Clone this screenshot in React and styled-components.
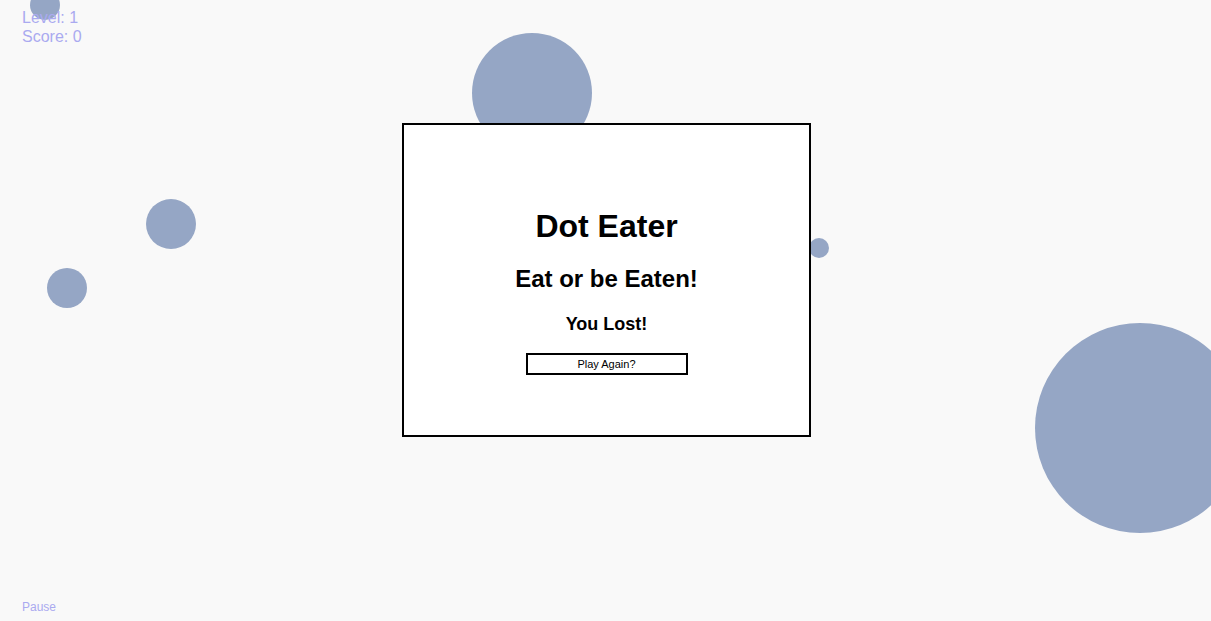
import React from 'react';
import styled, { createGlobalStyle } from 'styled-components';

const GlobalStyle = createGlobalStyle`
    html, body {
        margin: 0;
        padding: 0;
        background: #f9f9f9;
        font-family: 'Liberation Sans', Arial, Helvetica, sans-serif;
    }
`;

const Stage = styled.div`
    position: relative;
    width: 100vw;
    height: 100vh;
    overflow: hidden;
    background: #f9f9f9;
    display: flex;
    flex-direction: column;
    align-items: center;
    padding: 123px 0 0 2px;
    box-sizing: border-box;
`;

const Field = styled.div`
    position: absolute;
    inset: 0;
    pointer-events: none;
`;

const Dot = styled.div`
    position: absolute;
    border-radius: 50%;
    background: #95a6c5;
`;

const Hud = styled.div`
    position: absolute;
    top: 8px;
    left: 22px;
    font-size: 16px;
    line-height: 19px;
    color: #aaaaf0;
`;

const PauseLink = styled.div`
    position: absolute;
    left: 22px;
    bottom: 7px;
    font-size: 12px;
    line-height: 14px;
    color: #aaaaf0;
    cursor: pointer;
`;

const Modal = styled.div`
    position: relative;
    width: 409px;
    height: 314px;
    box-sizing: border-box;
    border: 2px solid #000;
    background: #fff;
    display: flex;
    flex-direction: column;
    align-items: center;
    padding-top: 85px;
`;

const Title = styled.h1`
    margin: 0;
    font-size: 32px;
    line-height: 32px;
    font-weight: bold;
    color: #000;
`;

const Tagline = styled.h2`
    margin: 25px 0 0;
    font-size: 24px;
    line-height: 24px;
    font-weight: bold;
    color: #000;
`;

const Result = styled.h3`
    margin: 24px 0 0;
    font-size: 18px;
    line-height: 18px;
    font-weight: bold;
    color: #000;
`;

const Button = styled.button`
    margin-top: 20px;
    width: 162px;
    height: 22px;
    box-sizing: border-box;
    border: 2px solid #000;
    background: #fff;
    font-family: 'Liberation Sans', Arial, sans-serif;
    font-size: 11px;
    color: #000;
    padding: 0;
    cursor: pointer;
`;

const dots = [
    { x: 45, y: 5, r: 15 },
    { x: 531.5, y: 93, r: 60 },
    { x: 171, y: 224, r: 25 },
    { x: 67, y: 288, r: 20 },
    { x: 819, y: 248, r: 10 },
    { x: 1140, y: 428, r: 105 },
];

const App = () => {
    return (
        <>
            <GlobalStyle />
            <Stage>
                <Field>
                    {dots.map((d, i) => (
                        <Dot
                            key={i}
                            style={{ left: d.x - d.r, top: d.y - d.r, width: d.r * 2, height: d.r * 2 }}
                        />
                    ))}
                </Field>
                <Hud>
                    <div>Level: 1</div>
                    <div>Score: 0</div>
                </Hud>
                <Modal>
                    <Title>Dot Eater</Title>
                    <Tagline>Eat or be Eaten!</Tagline>
                    <Result>You Lost!</Result>
                    <Button>Play Again?</Button>
                </Modal>
                <PauseLink>Pause</PauseLink>
            </Stage>
        </>
    );
};

export default App;
